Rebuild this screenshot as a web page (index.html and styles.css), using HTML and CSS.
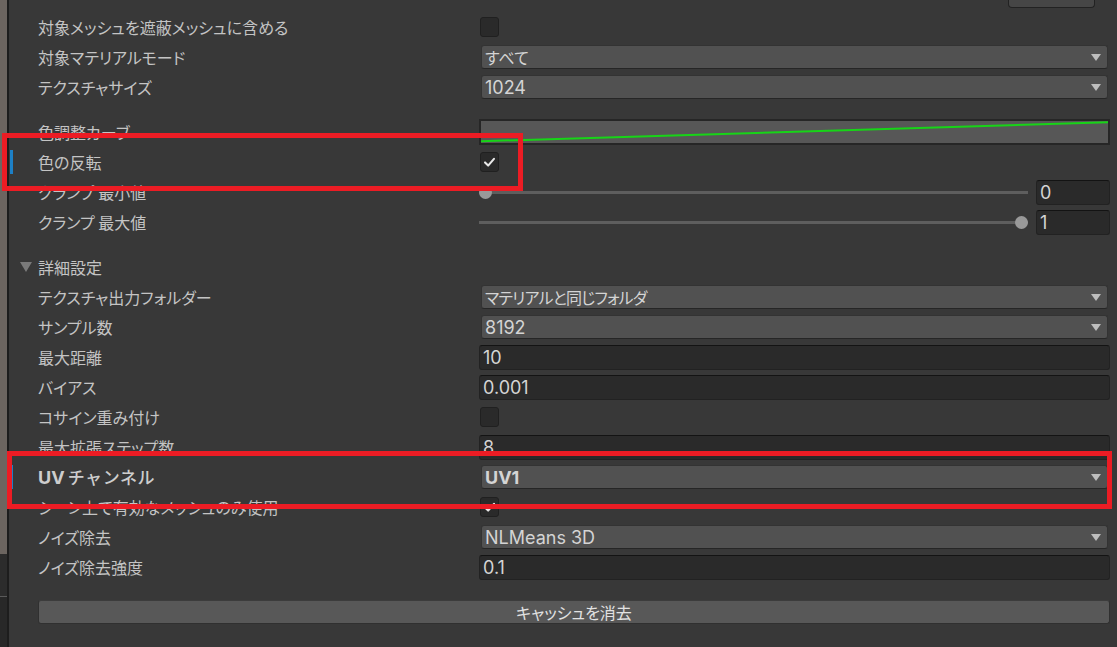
FILE: index.html
```html
<!DOCTYPE html>
<html lang="ja">
<head>
<meta charset="utf-8">
<title>Inspector</title>
<link rel="stylesheet" href="styles.css">
</head>
<body>
<div class="app">
  <div class="side">
    <div class="side-top"></div>
    <div class="side-tab"></div>
    <div class="side-line"></div>
    <div class="side-rest"></div>
  </div>
  <div class="divider"></div>
  <main class="panel">
    <div class="topbar"><div class="topbtn"></div></div>

    <div class="row"><span class="mark"></span><span class="label">対象メッシュを遮蔽メッシュに含める</span><div class="ctl"><span class="check"></span></div></div>
    <div class="row"><span class="mark"></span><span class="label">対象マテリアルモード</span><div class="ctl"><div class="dd"><span class="jp">すべて</span><span class="arrow"></span></div></div></div>
    <div class="row"><span class="mark"></span><span class="label">テクスチャサイズ</span><div class="ctl"><div class="dd"><span>1024</span><span class="arrow"></span></div></div></div>

    <div class="gap"></div>

    <div class="row"><span class="mark"></span><span class="label">色調整カーブ</span><div class="ctl"><div class="curve"><svg viewBox="0 0 100 10" preserveAspectRatio="none"><line x1="0" y1="9.2" x2="100" y2="0.6" stroke="#17d417" stroke-width="2" vector-effect="non-scaling-stroke"/></svg></div></div></div>
    <div class="row"><span class="mark on"></span><span class="label">色の反転</span><div class="ctl"><span class="check"><svg viewBox="0 0 19 20"><polyline points="4.5,10.5 8,14 14.5,6.5" fill="none" stroke="#e8e8e8" stroke-width="2.3" stroke-linecap="round" stroke-linejoin="round"/></svg></span></div></div>
    <div class="row"><span class="mark"></span><span class="label">クランプ 最小値</span><div class="ctl slider"><div class="track"><span class="knob" style="left: calc(0 * (100% - 13px));"></span></div><div class="field num">0</div></div></div>
    <div class="row"><span class="mark"></span><span class="label">クランプ 最大値</span><div class="ctl slider"><div class="track"><span class="knob" style="left: calc(1 * (100% - 13px));"></span></div><div class="field num">1</div></div></div>

    <div class="gap"></div>

    <div class="row"><span class="mark fold"><span class="tri"></span></span><span class="label">詳細設定</span><div class="ctl"></div></div>
    <div class="row"><span class="mark"></span><span class="label">テクスチャ出力フォルダー</span><div class="ctl"><div class="dd"><span class="jp narrow">マテリアルと同じフォルダ</span><span class="arrow"></span></div></div></div>
    <div class="row"><span class="mark"></span><span class="label">サンプル数</span><div class="ctl"><div class="dd"><span>8192</span><span class="arrow"></span></div></div></div>
    <div class="row"><span class="mark"></span><span class="label">最大距離</span><div class="ctl"><div class="field">10</div></div></div>
    <div class="row"><span class="mark"></span><span class="label">バイアス</span><div class="ctl"><div class="field">0.001</div></div></div>
    <div class="row"><span class="mark"></span><span class="label">コサイン重み付け</span><div class="ctl"><span class="check"></span></div></div>
    <div class="row"><span class="mark"></span><span class="label">最大拡張ステップ数</span><div class="ctl"><div class="field">8</div></div></div>
    <div class="row"><span class="mark on"></span><span class="label override"><span class="latin">UV</span><span class="wide">チャンネル</span></span><div class="ctl"><div class="dd"><span class="bold">UV1</span><span class="arrow"></span></div></div></div>
    <div class="row"><span class="mark"></span><span class="label">シーン上で有効なメッシュのみ使用</span><div class="ctl"><span class="check"><svg viewBox="0 0 19 20"><polyline points="4.5,10.5 8,14 14.5,6.5" fill="none" stroke="#e8e8e8" stroke-width="2.3" stroke-linecap="round" stroke-linejoin="round"/></svg></span></div></div>
    <div class="row"><span class="mark"></span><span class="label">ノイズ除去</span><div class="ctl"><div class="dd"><span>NLMeans 3D</span><span class="arrow"></span></div></div></div>
    <div class="row"><span class="mark"></span><span class="label">ノイズ除去強度</span><div class="ctl"><div class="field">0.1</div></div></div>

    <div class="btnrow"><div class="btn">キャッシュを消去</div></div>
  </main>

  <div class="annot box1"></div>
  <div class="annot box2"></div>
</div>
</body>
</html>
```

FILE: styles.css
```css
* { box-sizing: border-box; }
html, body { margin: 0; padding: 0; }
body {
  background: #383838;
  font-family: Inter, "Noto Sans CJK JP", sans-serif;
  color: #c4c4c4;
  overflow: hidden;
}
.app {
  position: relative;
  display: flex;
  width: 1117px;
  height: 647px;
}
.side {
  width: 7px;
  display: flex;
  flex-direction: column;
}
.side-top { flex: 1; background: #6c6560; }
.side-tab { height: 42px; background: #2c2c2c; }
.side-line { height: 1px; background: #5a5a5a; }
.side-rest { height: 50px; background: #282828; }
.divider { width: 2px; background: #1d1d1d; }

.panel {
  flex: 1;
  padding-right: 7px;
  background: #383838;
}
.topbar {
  height: 12px;
  display: flex;
  justify-content: flex-end;
  padding-right: 15px;
}
.topbtn {
  width: 87px;
  height: 8px;
  background: #464646;
  border: 1px solid #222222;
  border-top: none;
  border-radius: 0 0 4px 4px;
}

.row {
  display: grid;
  grid-template-columns: 29px 442px 1fr;
  align-items: center;
  height: 30px;
}
.gap { height: 15px; }

.mark {
  width: 3px;
  height: 24px;
  margin-left: 1px;
}
.mark.on { background: #1d80c6; }
.mark.fold {
  width: auto;
  margin-left: 11px;
  display: flex;
  align-items: center;
}
.tri {
  width: 0;
  height: 0;
  border-left: 6px solid transparent;
  border-right: 6px solid transparent;
  border-top: 10px solid #7a7a7a;
}

.label {
  font-family: "Noto Sans CJK JP", sans-serif;
  font-size: 16px;
  font-feature-settings: "palt";
  color: #c4c4c4;
  white-space: nowrap;
  line-height: 20px;
}
.label.override { color: #cdcdcd; }
.latin {
  font-family: Inter, sans-serif;
  font-size: 18px;
  font-weight: 700;
  margin-right: 3px;
}
.wide {
  font-feature-settings: normal;
  font-size: 17px;
  font-weight: 500;
  letter-spacing: 0.6px;
}

.ctl {
  display: flex;
  align-items: center;
  min-width: 0;
}

.check {
  width: 19px;
  height: 20px;
  border-radius: 3px;
  background: #2a2a2a;
  border: 1px solid #202020;
  display: flex;
}
.check svg { width: 17px; height: 18px; }

.dd {
  flex: 1;
  height: 24px;
  margin: 0 2px 0 1px;
  background: #515151;
  border: 1px solid #333333;
  border-bottom-color: #262626;
  border-radius: 3px;
  display: flex;
  align-items: center;
  justify-content: space-between;
  padding: 0 6px 0 3px;
  font-size: 18px;
  color: #d4d4d4;
  white-space: nowrap;
}
.dd .jp {
  font-family: "Noto Sans CJK JP", sans-serif;
  font-size: 16px;
  font-feature-settings: "palt";
}
.dd .narrow { letter-spacing: -0.8px; }
.dd .bold { font-weight: 700; }
.arrow {
  width: 0;
  height: 0;
  border-left: 5px solid transparent;
  border-right: 5px solid transparent;
  border-top: 7px solid #bdbdbd;
}

.field {
  flex: 1;
  height: 25px;
  margin-left: -1px;
  background: #2a2a2a;
  border: 1px solid #222222;
  border-top-color: #131313;
  border-radius: 3px;
  padding-left: 3px;
  display: flex;
  align-items: center;
  font-size: 18px;
  color: #d4d4d4;
}

.curve {
  flex: 1;
  height: 26px;
  margin-left: -1px;
  background: #575757;
  border: 2px solid #262626;
  display: flex;
}
.curve svg { width: 100%; height: 100%; display: block; }

.slider { gap: 8px; }
.track {
  flex: 1;
  position: relative;
  height: 13px;
  margin-left: -1px;
}
.track::before {
  content: "";
  position: absolute;
  left: 0;
  right: 0;
  top: 5px;
  height: 3px;
  background: #5e5e5e;
}
.knob {
  position: absolute;
  top: 0;
  width: 13px;
  height: 13px;
  border-radius: 50%;
  background: #999999;
}
.field.num {
  flex: 0 0 74px;
  margin-left: 0;
}

.btnrow {
  padding: 18px 0 0 29px;
}
.btn {
  height: 24px;
  background: #585858;
  border: 1px solid #303030;
  border-top-color: #3c3c3c;
  border-radius: 3px;
  display: flex;
  align-items: center;
  justify-content: center;
  font-family: "Noto Sans CJK JP", sans-serif;
  font-size: 16px;
  font-feature-settings: "palt";
  color: #e2e2e2;
}

.annot {
  position: absolute;
  border: 5px solid #ec1c24;
  pointer-events: none;
}
.box1 { left: 2px; top: 133px; width: 521px; height: 58px; }
.box2 { left: 7px; top: 451px; width: 1105px; height: 58px; }
```
